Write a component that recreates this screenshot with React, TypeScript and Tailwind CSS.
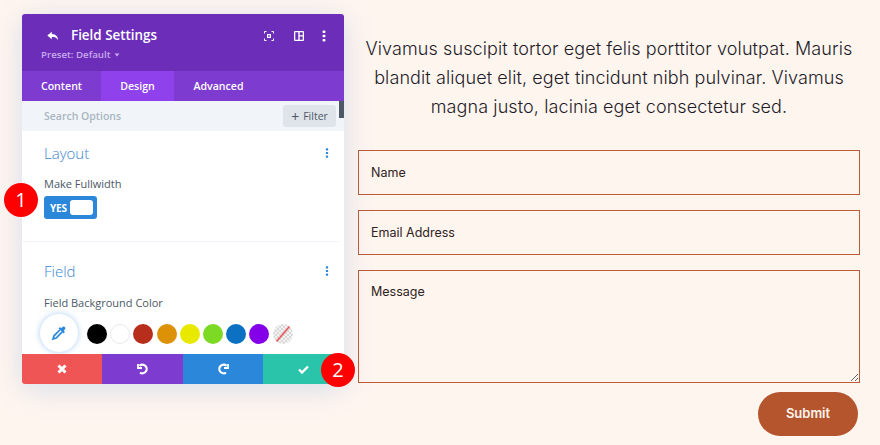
const SWATCHES = ['bg-[#000000]', 'bg-[#ffffff]', 'bg-[#b72f1c]', 'bg-[#dc9106]', 'bg-[#e9e900]', 'bg-[#7cda24]', 'bg-[#0c71c3]', 'bg-[#8300e9]'];

const Dots = ({ className }: { className: string }) => (
  <svg width="4" height="12" viewBox="0 0 4 12" className={className} fill="currentColor">
    <rect x="0.5" y="0.5" width="3" height="2.6" rx="1" />
    <rect x="0.5" y="4.7" width="3" height="2.6" rx="1" />
    <rect x="0.5" y="8.9" width="3" height="2.6" rx="1" />
  </svg>
);

const Badge = ({ n, className }: { n: number; className: string }) => (
  <div className={`absolute w-[34px] h-[34px] rounded-full bg-[#fe0000] text-white flex items-center justify-center text-[20px] font-['Open_Sans',sans-serif] ${className}`}>
    {n}
  </div>
);

const Field = ({ label }: { label: string }) => (
  <input
    readOnly
    placeholder={label}
    className="w-full h-[45px] border border-[#bb5c38] bg-transparent px-3 text-[12.5px] outline-none placeholder:text-[#2e2320]"
  />
);

export default function App() {
  return (
    <div className="relative w-[880px] h-[445px] overflow-hidden bg-[#fff5ef] flex items-start">
      {/* Panel */}
      <div className="relative ml-[22px] mt-[14px] w-[322px] h-[370px] flex flex-col rounded-[3px] bg-white shadow-[0_5px_30px_rgba(43,135,218,0.2)] font-['Open_Sans',sans-serif]">
        <div className="h-[57px] shrink-0 bg-[#6c2eb9] rounded-t-[3px] pl-[19px] pr-[18px] pt-[13px] relative">
          <div className="flex items-center h-[18px]">
            <svg width="12" height="11" viewBox="0 0 14 12" className="ml-[6px] text-white" fill="currentColor">
              <path d="M5.6 0.4 0.4 4.8l5.2 4.4V6.6c3-.1 5.2.3 7 3.600.4-3.800-2-6.600-7-7V.4z" />
            </svg>
            <span className="ml-[12px] text-[13.400px] font-semibold text-white leading-none">Field Settings</span>
            <div className="ml-auto flex items-center text-white">
              <svg width="10" height="10" viewBox="0 0 10 10" fill="none" stroke="currentColor" strokeWidth="1" className="mr-[20px]">
                <path d="M0.5 2.5v-2h2M7.5.5h2v2M9.5 7.5v2h-2M2.5 9.5h-2v-2" />
                <rect x="3" y="3" width="4" height="4" fill="currentColor" stroke="none" />
                <rect x="4.2" y="4.2" width="1.6" height="1.6" fill="#6c2eb9" stroke="none" />
              </svg>
              <svg width="10" height="10" viewBox="0 0 10 10" fill="currentColor" className="mr-[18px]">
                <path d="M1 0h8a1 1 0 0 1 1 1v8a1 1 0 0 1-1 1H1a1 1 0 0 1-1-1V1a1 1 0 0 1 1-1zm.3 1.3v7.4h3V1.3zm4.4 0v2.9h3V1.3zm0 4.2v3.2h3V5.500z" />
              </svg>
              <Dots className="text-white" />
            </div>
          </div>
          <div className="mt-[3px] flex items-center text-[9.700px] font-semibold text-[#c9a9ee] leading-[14px]">
            Preset: Default
            <svg width="6" height="4" viewBox="0 0 6 4" className="ml-[3px]" fill="currentColor">
              <path d="M0.500 0.500h5L3 3.500z" />
            </svg>
          </div>
        </div>

        <div className="h-[30px] shrink-0 bg-[#7e3bd0] flex text-[10.600px] font-semibold text-white">
          <div className="w-[79px] pt-[1px] flex items-center justify-center">Content</div>
          <div className="w-[73px] pt-[1px] flex items-center justify-center bg-[#8f42ec]">Design</div>
          <div className="w-[89px] pt-[1px] flex items-center justify-center">Advanced</div>
        </div>

        <div className="h-[30px] shrink-0 relative flex items-center pl-[22px] pr-[8px] bg-[#f1f5f9]">
          <span className="pt-[1px] text-[10.500px] font-semibold text-[#a9b6c2]">Search Options</span>
          <div className="ml-auto w-[53px] h-[22px] pt-[1px] bg-[#dfe4ea] rounded-[3px] flex items-center justify-center text-[10.500px] font-medium text-[#4c5866]">
            <span className="text-[14px] leading-none mr-[4px] font-normal">+</span>Filter
          </div>
          <div className="absolute right-0 top-0 w-[5px] h-[17px] bg-[#4c5866]" />
        </div>

        <div className="flex-1 overflow-hidden pl-[22px] pr-[14px]">
          <div className="flex items-center justify-between mt-[13px] h-[18px]">
            <span className="text-[15px] font-light text-[#3b86d0] leading-none">Layout</span>
            <Dots className="text-[#2b87da] mr-[1px] scale-[0.85]" />
          </div>
          <div className="mt-[14px] text-[11px] font-medium text-[#4c5866] leading-[15px]">Make Fullwidth</div>
          <div className="mt-[5px] w-[53px] h-[23px] rounded-[3px] bg-[#2b87da] flex items-center pl-[6px] pr-[4px]">
            <span className="text-[10px] font-bold text-white leading-none tracking-[-0.2px]">YES</span>
            <div className="ml-auto w-[23px] h-[15px] bg-white rounded-[3px]" />
          </div>
          <div className="mt-[22px] -ml-[22px] -mr-[9px] border-t border-[#f1f5f9]" />
          <div className="flex items-center justify-between mt-[20px] h-[18px]">
            <span className="text-[15px] font-light text-[#3b86d0] leading-none">Field</span>
            <Dots className="text-[#2b87da] mr-[1px] scale-[0.85]" />
          </div>
          <div className="mt-[15px] text-[11px] font-medium text-[#4c5866] leading-[15px]">Field Background Color</div>
          <div className="mt-[4px] -ml-[4px] flex items-center">
            <div className="w-[38px] h-[38px] shrink-0 rounded-full bg-white shadow-[0_0_6px_rgba(43,135,218,0.4)] flex items-center justify-center text-[#2b87da]">
              <svg width="16" height="16" viewBox="0 0 16 16" fill="none" stroke="currentColor">
                <path d="M8.800 5 3 10.800 2 14l3.200-1L11 7.200" strokeWidth="1.700" />
                <path d="M7.500 3.500 12.500 8.500 14 7l-1.300-1.300 1.500-1.600a1.800 1.800 0 0 0-2.400-2.400l-1.600 1.500L9 2z" fill="currentColor" stroke="none" />
              </svg>
            </div>
            <div className="ml-[9px] mt-[2px] flex items-center gap-[3.200px]">
              {SWATCHES.map((c, i) => (
                <div key={c} className={`w-[20px] h-[20px] rounded-full ${c} ${i === 1 ? 'border border-[#e6e9ec]' : ''}`} />
              ))}
              <svg width="20" height="20" viewBox="0 0 20 20">
                <defs>
                  <pattern id="checks" width="4" height="4" patternUnits="userSpaceOnUse">
                    <rect width="4" height="4" fill="#f2f2f2" />
                    <rect width="2" height="2" fill="#d9d9d9" />
                    <rect x="2" y="2" width="2" height="2" fill="#d9d9d9" />
                  </pattern>
                </defs>
                <circle cx="10" cy="10" r="10" fill="url(#checks)" />
                <path d="M3.500 17.500 16.500 2.500" stroke="#ef5555" strokeWidth="1.600" />
              </svg>
            </div>
          </div>
        </div>

        <div className="h-[30px] shrink-0 flex text-white rounded-b-[3px] overflow-hidden">
          <div className="w-[80px] bg-[#ef5555] flex items-center justify-center">
            <svg width="10" height="10" viewBox="0 0 10 10" stroke="currentColor" strokeWidth="3">
              <path d="M1.500 1.500l7 7M8.500 1.500l-7 7" />
            </svg>
          </div>
          <div className="w-[81px] bg-[#7e3bd0] flex items-center justify-center">
            <svg width="12" height="12" viewBox="0 0 12 12" fill="none" stroke="currentColor" strokeWidth="2.200">
              <path d="M2.500 2.800A4.300 4.300 0 1 1 3 9.600" />
              <path d="M1 1v4h4" strokeWidth="1.800" />
            </svg>
          </div>
          <div className="w-[80px] bg-[#2b87da] flex items-center justify-center">
            <svg width="12" height="12" viewBox="0 0 12 12" fill="none" stroke="currentColor" strokeWidth="2.200">
              <path d="M9.500 2.800A4.300 4.300 0 1 0 9 9.600" />
              <path d="M11 1v4H7" strokeWidth="1.800" />
            </svg>
          </div>
          <div className="w-[81px] bg-[#29c4a9] flex items-center justify-center">
            <svg width="11" height="9" viewBox="0 0 11 9" fill="none" stroke="currentColor" strokeWidth="2.400">
              <path d="M1 4.500l3 3 6-6" />
            </svg>
          </div>
        </div>
      </div>

      {/* Form side */}
      <div className="ml-[14px] w-[502px] font-['Inter',sans-serif] text-[#1e1c28]">
        <p className="mt-[34px] text-center text-[18px] font-light leading-[29px] tracking-[0.1px]">
          Vivamus suscipit tortor eget felis porttitor volutpat. Mauris blandit aliquet elit, eget tincidunt nibh pulvinar. Vivamus magna justo, lacinia eget consectetur sed.
        </p>
        <div className="mt-[29px] flex flex-col gap-[15px]">
          <Field label="Name" />
          <Field label="Email Address" />
          <textarea
            readOnly
            placeholder="Message"
            className="block w-full h-[113px] border border-[#bb5c38] bg-transparent px-3 py-[12px] text-[12.500px] outline-none placeholder:text-[#2e2320]"
          />
        </div>
        <div className="mt-[9px] flex justify-end pr-[2px]">
          <div className="w-[100px] h-[44px] rounded-full bg-[#b5552e] flex items-center justify-center text-[13px] font-semibold text-[#fff5ef]">
            Submit
          </div>
        </div>
      </div>

      <Badge n={1} className="left-[4px] top-[183px]" />
      <Badge n={2} className="left-[321px] top-[353px]" />
    </div>
  );
}
